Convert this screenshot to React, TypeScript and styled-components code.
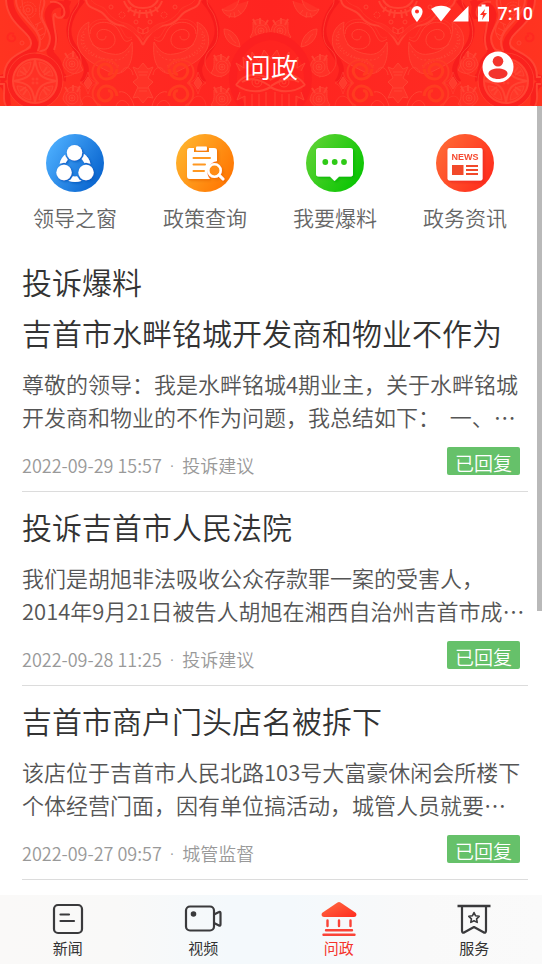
import React from "react";
import styled, { createGlobalStyle } from "styled-components";

const GlobalStyle = createGlobalStyle`
  *, *::before, *::after { box-sizing: border-box; }
  body {
    margin: 0;
    background: #fff;
    font-family: "Noto Sans CJK SC", "Noto Sans", sans-serif;
    font-weight: 350;
    color: #333;
  }
  button { font: inherit; color: inherit; border: 0; padding: 0; background: none; cursor: pointer; }
  a { color: inherit; text-decoration: none; }
  h1, h2, h3, p, ul { margin: 0; padding: 0; font-weight: inherit; }
  ul { list-style: none; }
  svg { display: block; }
`;

const Screen = styled.div`
  height: 100vh;
  display: flex;
  flex-direction: column;
`;

const Header = styled.header`
  position: relative;
  flex: none;
  overflow: hidden;
  color: #fff;
  background: linear-gradient(90deg, #ff3420 0%, #ff2a22 20%, #ff2420 50%, #ff2a22 80%, #ff3420 100%);
`;

const HeaderArt = styled.svg`
  position: absolute;
  inset: 0;
  width: 100%;
  height: 100%;
  opacity: 0.8;
`;

const StatusBar = styled.div`
  position: relative;
  height: 28px;
  padding-right: 9px;
  display: flex;
  align-items: center;
  justify-content: flex-end;
`;

const Clock = styled.time`
  margin-left: 6px;
  font: 500 18px/28px Roboto, sans-serif;
`;

const TitleBar = styled.div`
  position: relative;
  height: 78px;
  padding: 0 28px;
  display: grid;
  grid-template-columns: 1fr auto 1fr;
  align-items: center;
`;

const PageTitle = styled.h1`
  grid-column: 2;
  font-size: 27px;
  line-height: 38px;
`;

const ProfileButton = styled.button`
  justify-self: end;
`;

const Main = styled.main`
  position: relative;
  flex: 1;
  min-height: 0;
  overflow: hidden;
  padding-top: 28px;
`;

const ScrollThumb = styled.div`
  position: absolute;
  top: 0;
  right: 0;
  width: 5px;
  height: 64%;
  background: #b9b9b9;
`;

const Shortcuts = styled.nav`
  display: grid;
  grid-template-columns: repeat(4, 1fr);
  padding: 0 12px 0 10px;
`;

const Shortcut = styled.a`
  display: flex;
  flex-direction: column;
  align-items: center;
  gap: 9px;
  font-size: 21px;
  line-height: 32px;
  color: #666;
`;

const Complaints = styled.section`
  padding: 26px 14px 0 22px;
`;

const SectionTitle = styled.h2`
  font-size: 30px;
  line-height: 44px;
`;

const Item = styled.li`
  height: 194px;
  padding-top: 12px;
  border-bottom: 1px solid #dcdcdc;

  &:first-child { height: 189px; padding-top: 7px; }
`;

const ItemTitle = styled.h3`
  font-size: 30px;
  line-height: 44px;
  white-space: nowrap;
`;

const Excerpt = styled.p`
  margin-top: 13px;
  font-size: 22px;
  line-height: 33px;
  color: #555;
`;

const Meta = styled.div`
  margin-top: 14px;
  padding-right: 8px;
  display: flex;
  align-items: flex-start;
  justify-content: space-between;
`;

const Source = styled.p`
  padding-top: 4px;
  display: flex;
  gap: 8px;
  font-size: 18px;
  line-height: 28px;
  color: #999;
`;

const Dot = styled.span`
  font-family: "Noto Sans", sans-serif;
`;

const Badge = styled.span`
  height: 28px;
  padding: 0 8px;
  border-radius: 2px;
  background: #66c16a;
  color: #fff;
  font-size: 19px;
  line-height: 32px;
`;

const TabBar = styled.nav`
  flex: none;
  height: 69px;
  display: grid;
  grid-template-columns: repeat(4, 1fr);
  background: linear-gradient(90deg, #faf9f8 0%, #f9f9f8 22%, #f4f9fc 42%, #f4f9fc 54%, #f9f9f9 78%, #fafafa 100%);
`;

const Tab = styled.button<{ $active?: boolean }>`
  display: flex;
  flex-direction: column;
  align-items: center;
  padding-top: 5px;
  font-size: 15px;
  font-weight: 400;
  line-height: 22px;
  color: ${(p) => (p.$active ? "#f5332b" : "#333")};
`;

/* One side of a paisley pair; its mirror axis is x = 143. */
const Paisley = () => (
  <g id="paisley" fill="none" stroke="#ff4a38" strokeWidth="1">
    <path d="M83 0C76 8 70 18 69 28C68 40 74 46 79 54C86 64 90 70 82 82" stroke="#f61a1c" strokeWidth="5" />
    <path d="M79 0C79 8 73 10 71 18C67 30 67 42 74 48C82 54 83 64 78 70C76 74 70 76 64 77" strokeOpacity=".8" />
    <path d="M89 22C78 27 75 39 79 49C85 62 101 67 113 74C128 74 134 62 132 42C128 50 122 56 112 54C96 52 86 41 89 22Z" fill="#ff3429" />
    <path d="M86 28C79 36 80 46 87 52C95 59 108 59 116 60C123 60 128 54 130 49" strokeDasharray="2 2" />
    <path d="M84 34C81 43 86 49 93 54C103 60 110 61 120 67" strokeWidth="2" strokeDasharray="1 2" />
    <path d="M92 44C102 53 116 49 115 39C114 29 99 26 97 34C96 41 106 42 106 36" />
    <path d="M90 34C90 20 112 18 119 31C123 38 124 45 132 39" />
    <path d="M88 31C90 16 113 15 122 30C125 36 127 40 132 37" strokeOpacity=".5" />
    <path d="M118 68C113 56 96 58 93 68C91 76 95 80 98 83C90 90 91 101 101 106" stroke="#ff3f28" strokeWidth="2" />
    <path d="M108 74C111 75 114 70 110 66C104 61 96 67 99 74C103 83 116 79 117 69" stroke="#ff4020" strokeWidth="3" />
    <path d="M108 91C111 90 114 95 110 99C104 104 96 98 99 91C103 82 116 86 117 96" stroke="#ff4020" strokeWidth="3" />
    <path d="M121 72C126 64 132 68 133 75M119 92C126 90 132 98 134 106M116 106C120 96 128 102 129 106" />
    <path d="M84 83L88 77L92 83L88 89Z" fill="#ff4030" />
    <path d="M80 83C86 80 86 77 88 72C90 78 90 80 97 83C90 86 90 89 88 94C86 89 86 86 80 83ZM80 106C81 96 90 90 98 106" strokeOpacity=".6" />
    <path d="M143 63L138 69L133 67L138 78L133 82L138 87L133 98L138 97L143 103M143 72H138M143 75H139M143 88H138M143 91H139" fill="#ff3629" />
    <path d="M86 0C87 8 95 8 99 11C106 13 108 24 119 25C129 26 137 33 143 45" strokeWidth="2" />
    <path d="M91 0C96 7 103 5 106 10C110 18 119 22 125 23C133 25 140 33 143 40" fill="#ff3026" strokeOpacity=".4" />
    <path d="M124 1C127 10 134 13 143 13M128 0C132 7 137 8 143 8M131 7L128 12M136 9L134 16M140 10L139 18" strokeWidth="2" />
    <circle cx="122" cy="15" r="3" strokeDasharray="2 1" /><circle cx="136" cy="22" r="2" /><circle cx="111" cy="7" r="2" />
    <path d="M138 27l5 3v4l-5-2z" />
  </g>
);

const Eye = ({ x, y, flip }: { x: number; y: number; flip?: boolean }) => (
  <g transform={`translate(${x} ${y}) scale(${flip ? -1 : 1} 1)`} fill="none" stroke="#ff4a38">
    <path d="M-8 -9C-2 -15 8 -9 9 1C5 10 -4 12 -11 6C-7 1 -8 -4 -8 -9Z" fill="#ff3429" />
    <circle r="6" /><circle r="3" /><circle r="1" fill="#ff4a38" />
    <path d="M-5 -6L-8 -12M-1 -7L-1 -13M4 -6L7 -11" strokeWidth="2" />
  </g>
);

const HeaderPattern = () => (
  <HeaderArt viewBox="0 0 542 106" preserveAspectRatio="xMidYMid slice" aria-hidden="true">
    <defs>
      <g id="half">
        <g fill="none" stroke="#ff4a38">
          <path d="M10 0C10 24 40 34 34 50C31 56 8 52 8 76L0 79M8 106C5 98 10 86 0 83" stroke="#f81d1d" strokeWidth="7" />
          <path d="M6 0C7 25 32 32 31 44C30 53 4 52 4 77H0M0 84H4C5 93 2 100 6 106" strokeWidth="2" />
          <path d="M16 0C16 17 40 27 40 42C40 48 38 49 38 51" strokeWidth="2" />
          <path d="M68 0C60 18 68 20 66 8C63 1 49 4 48 14C47 24 60 35 51 49C47 55 57 56 59 66C60 72 62 78 66 78" stroke="#f81d1d" strokeWidth="7" />
          <path d="M44 0C46 7 40 10 42 18C44 26 54 35 48 46C46 52 40 50 40 52M50 2C60 0 66 8 64 15C62 19 55 19 55 13M54 14C51 25 60 36 54 50" strokeWidth="2" />
          <path d="M22 0C22 16 36 24 41 40C47 34 46 28 43 23C38 17 39 9 41 0M38 24C35 30 38 32 40 36M41 22L35 25M43 28L37 31M45 33L40 36" />
          <circle cx="28" cy="10" r="8" strokeDasharray="2 1" /><circle cx="28" cy="10" r="5" /><circle cx="28" cy="10" r="2" />
          <path d="M14 34C8 31 5 39 10 41C16 43 17 35 12 36" stroke="#ff2720" strokeWidth="2" />
          <circle cx="22" cy="43" r="2" />
          <circle cx="35" cy="81" r="25" stroke="#fa1e1e" strokeWidth="5" />
          <circle cx="35" cy="81" r="28" strokeOpacity=".7" />
          <circle cx="35" cy="81" r="22" fill="#ff3227" strokeWidth="2" />
          <path d="M35 59C33 75 29 79 13 81C29 83 33 87 35 103C37 87 41 83 57 81C41 79 37 75 35 59Z" strokeWidth="2" />
          <path d="M17 76C18 68 24 63 31 62C30 72 25 76 17 76ZM53 76C52 68 46 63 39 62C40 72 45 76 53 76ZM17 86C18 94 24 99 31 100C30 90 25 86 17 86ZM53 86C52 94 46 99 39 100C40 90 45 86 53 86Z" fill="#ff3a2c" />
          <path d="M20 71l6 4M23 67l4 6M50 71l-6 4M47 67l-4 6M20 91l6-4M23 95l4-6M50 91l-6-4M47 95l-4-6" strokeWidth="2" />
          <circle cx="33" cy="79" r="1" /><circle cx="37" cy="79" r="1" /><circle cx="33" cy="83" r="1" /><circle cx="37" cy="83" r="1" />
        </g>
        <Eye x={72} y={64} flip />
        <Eye x={72} y={98} flip />
        <Paisley />
        <use href="#paisley" transform="matrix(-1 0 0 1 286 0)" />
        <Eye x={222} y={67} />
        <Eye x={222} y={99} />
        <Eye x={261} y={31} />
        <g fill="none" stroke="#ff4a38">
          <path d="M271 36C248 38 232 56 233 81C234 92 238 100 243 106" stroke="#fc2020" strokeWidth="8" />
          <path d="M224 29C230 29 239 35 240 47C229 45 224 38 224 29Z" fill="#ff3429" /><path d="M228 34C232 36 231 40 236 43" />
          <path d="M222 9C226 21 244 20 248 1M222 9C229 13 236 11 239 0M229 18l2-5M235 18l-1-6M241 14l-3-4" fill="#ff3429" />
          <path d="M236 85C244 73 258 72 271 80M236 85C248 93 260 93 271 87M242 82C251 76 261 80 270 86" strokeWidth="2" />
          <circle cx="257" cy="82" r="5" /><circle cx="257" cy="82" r="2" />
          <path d="M240 71l-4-8 8 5-1-11 8 7 1-12 7 10 5-12 7 9M240 92l-3 8 8-4v10M252 94v12M259 94v12M266 92v14" fill="#ff3026" />
        </g>
      </g>
    </defs>
    <use href="#half" />
    <use href="#half" transform="matrix(-1 0 0 1 541 0)" />
  </HeaderArt>
);

const StatusIcons = () => (
  <svg width="82" height="20" viewBox="0 0 82 20" fill="#fff" role="img" aria-label="定位 无线 信号 充电">
    <path fillRule="evenodd" d="M7 2a5.600 5.600 0 0 1 5.600 5.600C12.600 12 7 18 7 18S1.400 12 1.400 7.600A5.600 5.600 0 0 1 7 2Zm0 3.600a2 2 0 1 0 0 4 2 2 0 0 0 0-4Z" />
    <path d="M21 5C26.500 .5 35.500 .5 41 5L31 17.500Z" />
    <path d="M58.500 2V17.500H43Z" />
    <path fillRule="evenodd" d="M71.500 .5h4v2h3.500v15H68V2.500h3.500ZM75 5l-5 6h3l-1 5 5-7h-3Z" />
  </svg>
);

const ProfileIcon = () => (
  <svg width="32" height="32" viewBox="0 0 32 32" aria-hidden="true">
    <circle cx="16" cy="16" r="15.500" fill="#fff" />
    <circle cx="16" cy="10.300" r="5.300" fill="#f3342d" />
    <path d="M6.500 22.500c0-3.300 5-5 9.500-5s9.500 1.700 9.500 5-5 5.500-9.500 5.500-9.500-2.200-9.500-5.500Z" fill="#f3342d" />
  </svg>
);

const Disc = ({ id, from, to, children }: { id: string; from: string; to: string; children: React.ReactNode }) => (
  <svg width="58" height="58" viewBox="0 0 58 58" aria-hidden="true">
    <defs>
      <linearGradient id={id} x1="0" y1=".2" x2="1" y2=".8">
        <stop stopColor={from} />
        <stop offset="1" stopColor={to} />
      </linearGradient>
      <filter id={`${id}-shadow`} x="-20%" y="-20%" width="150%" height="150%">
        <feDropShadow dx="1" dy="1" stdDeviation=".8" floodColor={to} floodOpacity=".9" />
        <feDropShadow dx="1" dy="1" stdDeviation=".6" floodColor="#000" floodOpacity=".18" />
      </filter>
    </defs>
    <circle cx="29" cy="29" r="29" fill={`url(#${id})`} />
    <g filter={`url(#${id}-shadow)`}>{children}</g>
  </svg>
);

const LeadersIcon = () => (
  <Disc id="blue" from="#4eb0ff" to="#0560cc">
    <mask id="ring-gaps" maskUnits="userSpaceOnUse" x="0" y="0" width="58" height="58">
      <rect width="58" height="58" fill="#fff" />
      <circle cx="28.500" cy="18.700" r="9.700" />
      <circle cx="18" cy="38.500" r="9.700" />
      <circle cx="40" cy="38.500" r="9.700" />
    </mask>
    <circle cx="29" cy="32.500" r="12.800" fill="none" stroke="#fff" strokeWidth="5.500" mask="url(#ring-gaps)" />
    <g fill="#fff">
      <circle cx="28.500" cy="18.700" r="7.700" />
      <circle cx="18" cy="38.500" r="7.700" />
      <circle cx="40" cy="38.500" r="7.700" />
    </g>
  </Disc>
);

const PolicyIcon = () => (
  <Disc id="orange" from="#ffb52e" to="#ff7300">
    <path d="M13 14h5v4h15v-4h5a3 3 0 0 1 3 3v10a11 11 0 0 0-7 18H14a3 3 0 0 1-3-3V17a3 3 0 0 1 2-3Z" fill="#fff" />
    <rect x="20" y="12.500" width="11" height="4" rx="1" fill="#fff" />
    <path d="M17.500 24H34M17.500 30.500H29M17.500 37H28" stroke="#ff9820" strokeWidth="2" strokeLinecap="round" />
    <circle cx="38.500" cy="36.500" r="6.200" fill="#ff8c12" stroke="#fff" strokeWidth="2.500" />
    <path d="M43 41l4 4" stroke="#fff" strokeWidth="3" strokeLinecap="round" />
  </Disc>
);

const ReportIcon = () => (
  <Disc id="green" from="#5fd334" to="#05c400">
    <path d="M12.500 14h32a2.500 2.500 0 0 1 2.500 2.500V40a2.500 2.500 0 0 1-2.500 2.500H33L28.500 47 24 42.500H12.500A2.500 2.500 0 0 1 10 40V16.500A2.500 2.500 0 0 1 12.500 14Z" fill="#fff" />
    <g fill="#2fca18">
      <circle cx="19.300" cy="28" r="2.900" /><circle cx="28.700" cy="28" r="2.900" /><circle cx="38" cy="28" r="2.900" />
    </g>
  </Disc>
);

const NewsDiscIcon = () => (
  <Disc id="red" from="#ff6a35" to="#ff2a1c">
    <rect x="11.500" y="14" width="35" height="32.500" rx="2" fill="#fff" />
    <text x="29" y="26.200" textAnchor="middle" fontFamily="Liberation Sans, sans-serif" fontWeight="700" fontSize="9" fill="#f54a30">NEWS</text>
    <path d="M16 31h11.500v10H16Z" fill="#f2492c" />
    <path d="M30 32h12M30 36h12M30 40h12" stroke="#f2492c" strokeWidth="2" />
  </Disc>
);

const tabSvg = { width: 40, height: 37, viewBox: "0 0 40 37", fill: "none", "aria-hidden": true } as const;

const NewsTabIcon = () => (
  <svg {...tabSvg} stroke="#3a3a3c" strokeWidth="2.200" strokeLinecap="round">
    <rect x="6" y="5" width="28" height="28" rx="4" />
    <path d="M12.500 14.500H21M12.500 21H26" />
  </svg>
);

const VideoTabIcon = () => (
  <svg {...tabSvg} stroke="#3a3a3c" strokeWidth="2.200" strokeLinejoin="round">
    <rect x="3" y="6.500" width="28" height="24" rx="4" />
    <path d="M31 14.500L36 12a1 1 0 0 1 1.500 1V24.500a1 1 0 0 1-1.500 1L31 23" />
    <circle cx="10.500" cy="14" r="1.700" fill="#3a3a3c" />
  </svg>
);

const CivicTabIcon = () => (
  <svg {...tabSvg}>
    <defs>
      <linearGradient id="roof" x1="0" y1="0" x2="1" y2="1">
        <stop stopColor="#ff6e45" />
        <stop offset="1" stopColor="#ff2c1f" />
      </linearGradient>
    </defs>
    <path d="M18.500 2.500a3 3 0 0 1 3 0L36.300 12.500c2 1.500 1.200 4.500-1.300 4.500H5c-2.500 0-3.300-3-1.300-4.500Z" fill="url(#roof)" />
    <path d="M8.500 20.500v5.500M20 20.500v5.500M31.500 20.500v5.500M7 30.200H33M4.500 34.800H35.500" stroke="#fa4337" strokeWidth="2.400" strokeLinecap="round" />
  </svg>
);

const ServiceTabIcon = () => (
  <svg {...tabSvg} stroke="#3a3a3c" strokeWidth="2.200" strokeLinejoin="round">
    <path d="M3.500 6H36.500" strokeWidth="2.600" />
    <path d="M8 6V30.500c0 2 1 2.700 2.500 1.800L20 27l9.500 5.300c1.500.9 2.500.2 2.500-1.800V6" />
    <path d="M20 12.500l1.600 3.300 3.600.5-2.600 2.500.6 3.600-3.200-1.700-3.200 1.700.6-3.600-2.600-2.500 3.600-.5Z" strokeWidth="1.600" />
  </svg>
);

const shortcuts = [
  { label: "领导之窗", Icon: LeadersIcon },
  { label: "政策查询", Icon: PolicyIcon },
  { label: "我要爆料", Icon: ReportIcon },
  { label: "政务资讯", Icon: NewsDiscIcon },
];

const complaints = [
  {
    title: "吉首市水畔铭城开发商和物业不作为",
    excerpt: "尊敬的领导：我是水畔铭城4期业主，关于水畔铭城开发商和物业的不作为问题，我总结如下：\u00a0 一、…",
    time: "2022-09-29 15:57",
    kind: "投诉建议",
  },
  {
    title: "投诉吉首市人民法院",
    excerpt: "我们是胡旭非法吸收公众存款罪一案的受害人，2014年9月21日被告人胡旭在湘西自治州吉首市成…",
    time: "2022-09-28 11:25",
    kind: "投诉建议",
  },
  {
    title: "吉首市商户门头店名被拆下",
    excerpt: "该店位于吉首市人民北路103号大富豪休闲会所楼下个体经营门面，因有单位搞活动，城管人员就要…",
    time: "2022-09-27 09:57",
    kind: "城管监督",
  },
];

const tabs = [
  { label: "新闻", Icon: NewsTabIcon },
  { label: "视频", Icon: VideoTabIcon },
  { label: "问政", Icon: CivicTabIcon, active: true },
  { label: "服务", Icon: ServiceTabIcon },
];

export default function App() {
  return (
    <Screen lang="zh-CN">
      <GlobalStyle />
      <Header>
        <HeaderPattern />
        <StatusBar>
          <StatusIcons />
          <Clock>7:10</Clock>
        </StatusBar>
        <TitleBar>
          <PageTitle>问政</PageTitle>
          <ProfileButton type="button" aria-label="个人中心">
            <ProfileIcon />
          </ProfileButton>
        </TitleBar>
      </Header>
      <Main>
        <Shortcuts>
          {shortcuts.map(({ label, Icon }) => (
            <Shortcut key={label} href="#">
              <Icon />
              {label}
            </Shortcut>
          ))}
        </Shortcuts>
        <Complaints>
          <SectionTitle>投诉爆料</SectionTitle>
          <ul>
            {complaints.map((c) => (
              <Item key={c.title}>
                <ItemTitle>{c.title}</ItemTitle>
                <Excerpt>{c.excerpt}</Excerpt>
                <Meta>
                  <Source>
                    <time>{c.time}</time>
                    <Dot>·</Dot>
                    <span>{c.kind}</span>
                  </Source>
                  <Badge>已回复</Badge>
                </Meta>
              </Item>
            ))}
          </ul>
        </Complaints>
        <ScrollThumb />
      </Main>
      <TabBar>
        {tabs.map(({ label, Icon, active }) => (
          <Tab key={label} type="button" $active={active} aria-current={active ? "page" : undefined}>
            <Icon />
            {label}
          </Tab>
        ))}
      </TabBar>
    </Screen>
  );
}
